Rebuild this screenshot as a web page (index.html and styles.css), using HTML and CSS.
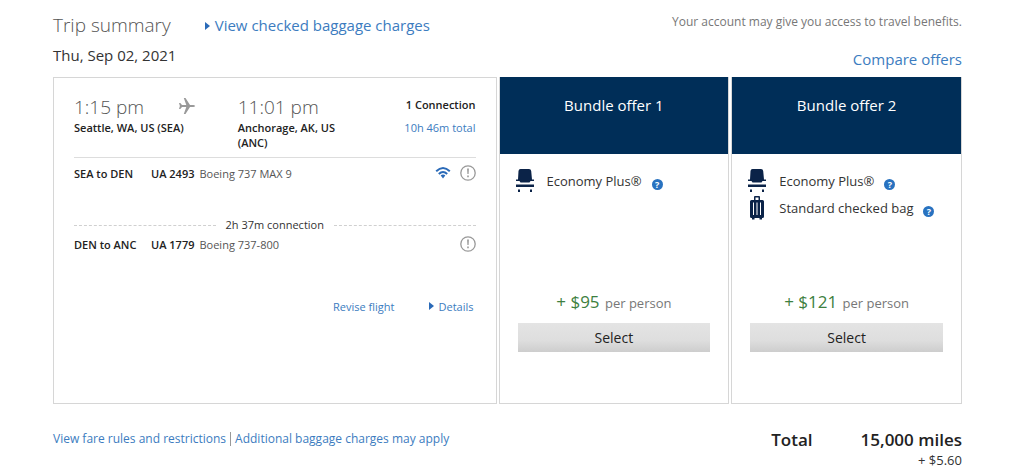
FILE: index.html
```html
<!DOCTYPE html>
<html lang="en">
<head>
<meta charset="utf-8">
<title>Trip summary</title>
<link rel="stylesheet" href="styles.css">
</head>
<body>
<svg class="sprite" aria-hidden="true">
  <symbol id="seat" viewBox="0 0 20 24">
    <path d="M5.500 0h8.500q2 0 2.200 2l.8 8.500H19V12h-3.500l-1 1.500h-9L4.500 12H1v-1.500h2L3.500 2Q3.700 0 5.500 0zM1 15.500h18v2.500H1zM3 20.500h2V23H3zM15 20.500h2V23h-2z"/>
  </symbol>
  <symbol id="bag" viewBox="0 0 20 24">
    <path fill-rule="evenodd" d="M7 4V1q0-1 1-1h4q1 0 1 1v3h2.500Q17 4 17 5.500v15q0 1.500-1.500 1.500H15v1.500h-2.500V22h-5v1.500H5V22h-.5Q3 22 3 20.500v-15Q3 4 4.500 4zM8.500 4h3V1.500h-3zM6 6.500v12.500h1V6.500zM9.500 6.500v12.500h1V6.500zM13 6.500v12.500h1V6.500z"/>
  </symbol>
  <symbol id="alert" viewBox="0 0 16 16">
    <circle cx="8" cy="8" r="7.200" fill="none" stroke="currentColor" stroke-width="1.300"/>
    <path d="M7.100 3.500h1.800l-.3 5.500H7.400zM7.200 10.500h1.600v1.700H7.200z"/>
  </symbol>
</svg>
<main class="page">
  <header class="header">
    <div class="heading">
      <div class="title-row">
        <h1 class="title">Trip summary</h1>
        <a class="link link-large" href="#baggage"><span class="arrow"></span>View checked baggage charges</a>
      </div>
      <p class="date">Thu, Sep 02, 2021</p>
    </div>
    <div class="benefits">
      <p class="note">Your account may give you access to travel benefits.</p>
      <a class="link link-large" href="#compare">Compare offers</a>
    </div>
  </header>

  <div class="cards">
    <section class="card flight">
      <div class="route">
        <div class="stop">
          <p class="time">1:15 pm</p>
          <p class="city">Seattle, WA, US (SEA)</p>
        </div>
        <svg class="plane" viewBox="0 0 18 18" aria-hidden="true"><path d="M1 6h1.300L4 8h4.300L5.800 1H7.500L12 8h3.500q1.700 .3 1.700 1t-1.700 1H12L7.500 17H5.800L8.300 10H4L2.300 12H1L1.900 9z"/></svg>
        <div class="stop">
          <p class="time">11:01 pm</p>
          <p class="city city-narrow">Anchorage, AK, US (ANC)</p>
        </div>
        <div class="duration">
          <p class="connections">1 Connection</p>
          <a class="link" href="#duration">10h 46m total</a>
        </div>
      </div>
      <div class="segment segment-first">
        <strong class="leg">SEA to DEN</strong>
        <strong>UA 2493</strong>
        <span class="aircraft">Boeing 737 MAX 9</span>
        <svg class="wifi" viewBox="0 0 16 14" role="img" aria-label="Wi-Fi"><path d="M1.200 5.200Q8-1.200 14.800 5.200M3.800 8Q8 4 12.200 8" fill="none" stroke="currentColor" stroke-width="2"/><path d="M8 8.600q1.400 0 2.300 1L8 12.400 5.700 9.600Q6.600 8.600 8 8.600z"/></svg>
        <svg class="alert" role="img" aria-label="Notice"><use href="#alert"/></svg>
      </div>
      <p class="layover">2h 37m connection</p>
      <div class="segment">
        <strong class="leg">DEN to ANC</strong>
        <strong>UA 1779</strong>
        <span class="aircraft">Boeing 737-800</span>
        <svg class="alert" role="img" aria-label="Notice"><use href="#alert"/></svg>
      </div>
      <div class="actions">
        <a class="link" href="#revise">Revise flight</a>
        <a class="link" href="#details"><span class="arrow"></span>Details</a>
      </div>
    </section>

    <section class="card offer">
      <h2 class="offer-title">Bundle offer 1</h2>
      <ul class="perks">
        <li class="perk"><svg class="perk-icon" aria-hidden="true"><use href="#seat"/></svg>Economy Plus®<button class="help" aria-label="About Economy Plus">?</button></li>
      </ul>
      <p class="price"><span class="amount">+ $95</span> per person</p>
      <button class="select">Select</button>
    </section>

    <section class="card offer">
      <h2 class="offer-title">Bundle offer 2</h2>
      <ul class="perks">
        <li class="perk"><svg class="perk-icon" aria-hidden="true"><use href="#seat"/></svg>Economy Plus®<button class="help" aria-label="About Economy Plus">?</button></li>
        <li class="perk"><svg class="perk-icon" aria-hidden="true"><use href="#bag"/></svg>Standard checked bag<button class="help" aria-label="About checked bag">?</button></li>
      </ul>
      <p class="price"><span class="amount">+ $121</span> per person</p>
      <button class="select">Select</button>
    </section>
  </div>

  <footer class="footer">
    <nav class="rules">
      <a class="link" href="#rules">View fare rules and restrictions</a>
      <a class="link rule-next" href="#charges">Additional baggage charges may apply</a>
    </nav>
    <div class="total">
      <strong class="total-main">Total</strong>
      <div class="total-value">
        <strong class="total-main">15,000 miles</strong>
        <p class="tax">+ $5.60</p>
      </div>
    </div>
  </footer>
</main>
</body>
</html>
```
FILE: styles.css
```css
* { box-sizing: border-box; }
body {
  margin: 0;
  background: #fff;
  color: #333;
  font: 11px/15px "Open Sans", "Noto Sans", sans-serif;
}
h1, h2, p, ul { margin: 0; padding: 0; }
button { border: 0; padding: 0; font-family: inherit; }
strong { font-weight: 600; color: #222; }
svg { fill: currentColor; flex: none; }
.sprite { display: none; }
.page { padding: 10px 62px 0 53px; }

.link { color: #3c7cc0; text-decoration: none; }
.link-large { font-size: 15px; line-height: 24px; }
.arrow {
  display: inline-block;
  margin-right: 5px;
  border: solid transparent;
  border-width: 4px 0 4px 5px;
  border-left-color: #2a6ab8;
  vertical-align: 1px;
}

.header { display: flex; justify-content: space-between; height: 67px; }
.title-row { display: flex; align-items: center; gap: 34px; }
.title { color: #555; font-size: 19px; font-weight: 300; line-height: 30px; }
.date { margin-top: 3px; font-size: 15px; line-height: 24px; }
.benefits { padding-top: 4px; text-align: right; }
.note { margin-bottom: 17px; color: #777; font-size: 12px; line-height: 16px; }

.cards { display: grid; grid-template-columns: 444fr 231fr 231fr; gap: 2px; }
.card { min-height: 327px; border: 1px solid #d6d6d6; }

.flight { padding: 17px 20px; }
.route {
  display: flex;
  min-height: 63px;
  border-bottom: 1px solid #ddd;
}
.time { color: #555; font-size: 19px; font-weight: 300; line-height: 25px; }
.city { color: #222; font-weight: 600; }
.city-narrow { max-width: 110px; }
.plane { width: 18px; height: 18px; margin: 2px 42px 0 -6px; color: #999; }
.duration { margin-left: auto; padding-top: 2px; text-align: right; }
.connections { margin-bottom: 8px; color: #222; font-weight: 600; }
.segment { display: flex; align-items: center; min-height: 18px; }
.segment-first { margin: 6px 0 35px; }
.leg { width: 77px; }
.aircraft { margin: 0 auto 0 5px; color: #555; }
.wifi { width: 16px; height: 14px; margin-right: 9px; color: #2a6ab8; }
.alert { width: 16px; height: 16px; color: #999; }
.layover { display: flex; align-items: center; gap: 10px; margin-bottom: 2px; line-height: 16px; }
.layover::before, .layover::after { content: ""; flex: 1; border-top: 1px dashed #d0d0d0; }
.actions { display: flex; justify-content: flex-end; gap: 34px; margin: 46px 2px 0 0; }

.offer { display: flex; flex-direction: column; border-top: 0; }
.offer-title {
  padding: 16px 0 37px;
  background: #002e58;
  color: #fff;
  font-size: 15px;
  font-weight: 400;
  line-height: 24px;
  text-align: center;
}
.perks { padding: 13px 15px; list-style: none; }
.perk { display: flex; align-items: center; height: 27px; font-size: 13px; line-height: 18px; }
.perk-icon { width: 20px; height: 24px; margin-right: 12px; color: #0b2348; }
.help {
  width: 11px;
  height: 11px;
  margin: 8px 0 0 10px;
  border-radius: 50%;
  background: #2872c0;
  color: #fff;
  font-size: 9px;
  font-weight: 700;
  line-height: 11px;
}
.price { margin-top: auto; color: #777; font-size: 13px; line-height: 24px; text-align: center; }
.amount { margin-right: 2px; color: #3d8040; font-size: 17px; }
.select {
  height: 29px;
  margin: 8px 18px 51px;
  background: linear-gradient(#e4e4e4, #dedede 60%, #cdcdcd);
  color: #222;
  font-size: 14px;
}

.footer { display: flex; justify-content: space-between; padding-top: 24px; }
.rules { display: flex; align-items: flex-start; gap: 4px; padding-top: 4px; font-size: 12px; line-height: 14px; }
.rule-next { padding-left: 4px; border-left: 1px solid #999; }
.total { display: flex; gap: 48px; }
.total-main { font-size: 17px; line-height: 24px; }
.total-value { text-align: right; }
.tax { font-size: 13px; line-height: 16px; }
```
